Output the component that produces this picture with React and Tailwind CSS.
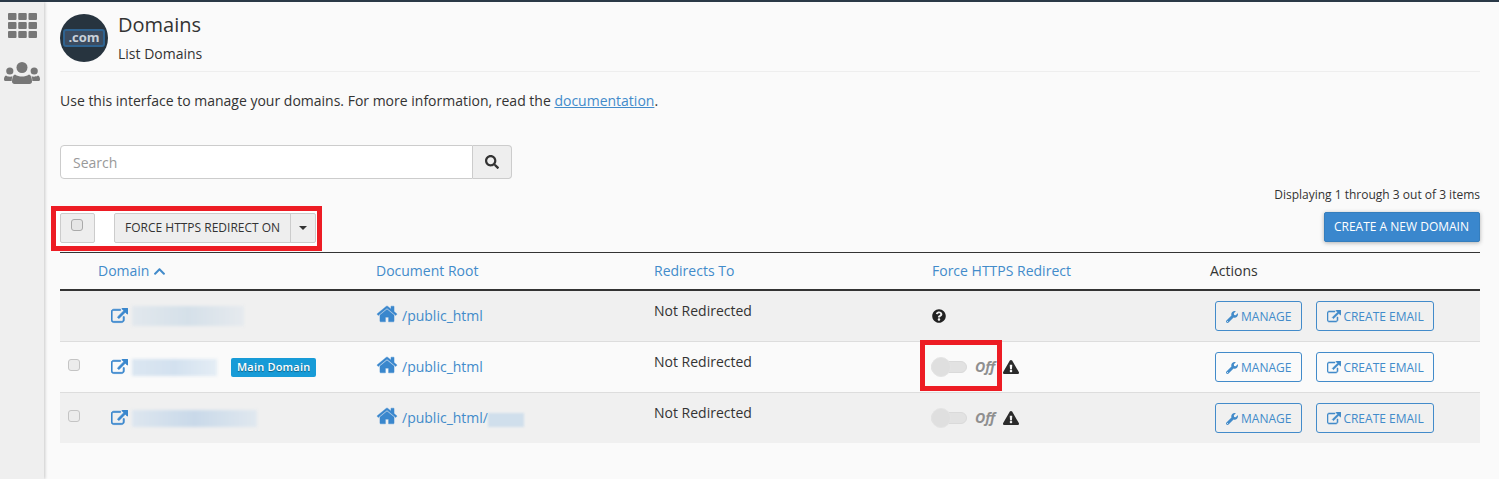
import React from "react";
import { FaChevronUp, FaExclamationTriangle, FaQuestionCircle, FaSearch, FaWrench } from "react-icons/fa";

// Font Awesome 4 shapes, the packaged ones are the redrawn v5 set
const HomeIcon = ({ className }) => (
  <svg className={className} viewBox="0 0 1792 1792" fill="currentColor" stroke="currentColor" strokeWidth="30">
    <path d="M1472 992v480q0 26-19 45t-45 19h-384v-384h-256v384h-384q-26 0-45-19t-19-45v-480q0-1 .5-3t.5-3l575-474 575 474q1 2 1 6zm223-69l-62 74q-8 9-21 11h-3q-13 0-21-7l-692-577-692 577q-12 8-24 7-13-2-21-11l-62-74q-8-10-7-23.500t11-21.500l719-599q32-26 76-26t76 26l244 204v-195q0-14 9-23t23-9h192q14 0 23 9t9 23v408l219 182q10 8 11 21.500t-7 23.500z" />
  </svg>
);

const LinkIcon = ({ className }) => (
  <svg className={className} viewBox="0 0 1792 1792" fill="currentColor" stroke="currentColor" strokeWidth="70">
    <path d="M1408 928v320q0 119-84.500 203.500t-203.500 84.500h-832q-119 0-203.500-84.500t-84.500-203.500v-832q0-119 84.500-203.500t203.500-84.500h704q14 0 23 9t9 23v64q0 14-9 23t-23 9h-704q-66 0-113 47t-47 113v832q0 66 47 113t113 47h832q66 0 113-47t47-113v-320q0-14 9-23t23-9h64q14 0 23 9t9 23zm384-864v512q0 26-19 45t-45 19-45-19l-176-176-652 652q-10 10-23 10t-23-10l-114-114q-10-10-10-23t10-23l652-652-176-176q-19-19-19-45t19-45 45-19h512q26 0 45 19t19 45z" />
  </svg>
);

const UsersIcon = ({ className }) => (
  <svg className={className} viewBox="0 0 36 22" fill="currentColor">
    <circle cx="18" cy="5.500" r="5.500" />
    <circle cx="5.800" cy="9" r="3.600" />
    <circle cx="30.200" cy="9" r="3.600" />
    <path d="M11 12.500c2 1.500 4.500 2 7 2s5-.5 7-2c2 .5 3 3.500 3 7 0 1.500-1 2.500-2.500 2.500h-15c-1.500 0-2.500-1-2.500-2.500 0-3.500 1-6.500 3-7z" />
    <path d="M2 13.500c1 .8 2.500 1.200 4 1.200 1 0 1.800-.2 2.500-.4-.6 1.300-.8 3-.8 4.700h-6.200c-1 0-1.500-.6-1.500-1.500 0-2 .7-3.500 2-4z" />
    <path d="M34 13.500c-1 .8-2.500 1.200-4 1.200-1 0-1.800-.2-2.500-.4.600 1.300.8 3 .8 4.700h6.200c1 0 1.500-.6 1.500-1.500 0-2-.7-3.500-2-4z" />
  </svg>
);

const GridIcon = ({ className }) => (
  <svg className={className} viewBox="0 0 29 25" fill="currentColor">
    <rect x="0" y="0" width="8.500" height="7" rx="1" />
    <rect x="10.250" y="0" width="8.500" height="7" rx="1" />
    <rect x="20.500" y="0" width="8.500" height="7" rx="1" />
    <rect x="0" y="9" width="8.500" height="7" rx="1" />
    <rect x="10.250" y="9" width="8.500" height="7" rx="1" />
    <rect x="20.500" y="9" width="8.500" height="7" rx="1" />
    <rect x="0" y="18" width="8.500" height="7" rx="1" />
    <rect x="10.250" y="18" width="8.500" height="7" rx="1" />
    <rect x="20.500" y="18" width="8.500" height="7" rx="1" />
  </svg>
);

const rows = [
  { blur: "w-[112px] h-[20px] from-[#e2e8ed] via-[#d5e0e9] to-[#e6eaee]", root: "/public_html", https: "unknown", stripe: true, check: false },
  { blur: "w-[85px] h-[17px] from-[#dbe6f1] via-[#d3e1ef] to-[#e4edf5]", main: true, root: "/public_html", https: "off", marked: true, stripe: false, check: true },
  { blur: "w-[125px] h-[17px] from-[#dde6ef] via-[#c9d9e9] to-[#e0e8ef]", root: "/public_html/", rootBlur: true, https: "off", stripe: true, check: true, last: true },
];

const Checkbox = ({ className = "border-[#c4c4c4] bg-[#ececec]" }) => (
  <span className={`block w-3 h-3 rounded-[3px] border ${className}`} />
);

const OffSwitch = () => (
  <div className="flex items-center">
    <div className="relative w-9 h-5 flex items-center">
      <span className="absolute left-0 w-5 h-5 rounded-full bg-[#dfdfdf] border border-[#e4e4e4]" />
      <span className="w-full h-3 rounded-full bg-[#e2e2e2] border border-[#dadada]" />
    </div>
    <span className="ml-2 italic font-bold text-[#8f8f8f] text-sm">Off</span>
    <FaExclamationTriangle className="ml-2 text-[#2b2b2b]" size={16} />
  </div>
);

const Row = ({ row }) => (
  <div className={`grid grid-cols-[38px_278px_278px_278px_278px_1fr] ${row.last ? "h-[50px]" : "h-[51px] border-b border-[#dddddd]"} ${row.stripe ? "bg-[#f0f0f0]" : "bg-[#fafafa]"}`}>
    <div className="flex items-center pl-2 pb-1">{row.check && <Checkbox />}</div>
    <div className="flex items-center pl-[13px]">
      <LinkIcon className="w-[17px] h-[17px] text-[#3a87cd]" />
      <span className={`ml-[4px] bg-gradient-to-r ${row.blur} blur-[1.500px]`} />
      {row.main && (
        <span className="ml-[14px] px-[6px] h-[19px] flex items-center rounded-[2px] bg-[#179bd7] text-white text-[11px] font-semibold tracking-[0.2px] [text-shadow:0_1px_1px_rgba(0,0,0,0.4)]">
          Main Domain
        </span>
      )}
    </div>
    <div className="flex items-center text-[#428bca] text-sm">
      <HomeIcon className="w-[22px] h-[22px] text-[#3a87cd] mb-1" />
      <span className="ml-[4px]">{row.root}</span>
      {row.rootBlur && <span className="w-9 h-[14px] mt-1 bg-[#d0dfec] blur-[1px]" />}
    </div>
    <div className="pt-[10px] text-sm text-[#333333]">Not Redirected</div>
    <div className="relative flex items-center -ml-[1px]">
      {row.https === "unknown" ? (
        <FaQuestionCircle className="ml-[1px] text-[#222222]" size={14} />
      ) : (
        <OffSwitch />
      )}
      {row.marked && (
        <span className="absolute -left-[11px] -top-[2px] w-[82px] h-[51px] border-[5px] border-[#ed1c24]" />
      )}
    </div>
    <div className="flex items-center pl-[5px] gap-[14px]">
      <button className="h-[30px] px-[10px] pt-[1px] flex items-center rounded-[3px] border border-[#428bca] text-[#428bca] text-xs">
        <FaWrench className="mr-[3px]" size={12} />
        MANAGE
      </button>
      <button className="h-[30px] pl-[10px] pr-[9px] pt-[1px] flex items-center rounded-[3px] border border-[#428bca] text-[#428bca] text-xs">
        <LinkIcon className="w-[14px] h-[14px] mr-[2px]" />
        CREATE EMAIL
      </button>
    </div>
  </div>
);

export default function App() {
  return (
    <div className="flex h-[479px] overflow-hidden bg-[#fafafa] border-t-2 border-[#2a3947] font-['Open_Sans',sans-serif] text-[#333333]">
      <aside className="w-[44px] shrink-0 bg-[#efefef] shadow-[1px_0_3px_rgba(0,0,0,0.2)] flex flex-col items-center pt-[11px]">
        <GridIcon className="w-[29px] h-[25px] text-[#777777]" />
        <UsersIcon className="w-[36px] h-[22px] mt-[24px] text-[#777777]" />
      </aside>

      <main className="flex-1 pl-[16px] pr-[19px]">
        <header className="flex items-start h-[57px] pt-[12px] box-content border-b border-[#eeeeee]">
          <div className="w-12 h-12 rounded-full bg-[#27343f] flex items-center justify-center">
            <span className="w-[42px] h-[18px] flex items-center justify-center rounded-[3px] border-2 border-[#2f6390] bg-[#3c4c60] text-[#c9d1da] text-[13px] font-bold">
              .com
            </span>
          </div>
          <div className="ml-[10px] -mt-[1px]">
            <h1 className="text-xl leading-[24px] text-[#333333]">Domains</h1>
            <p className="mt-[7px] text-sm leading-[20px]">List Domains</p>
          </div>
        </header>

        <p className="mt-[19px] text-sm leading-[20px]">
          Use this interface to manage your domains. For more information, read the{" "}
          <span className="text-[#428bca] underline">documentation</span>.
        </p>

        <div className="flex w-[452px] h-[34px] mt-[34px]">
          <div className="flex-1 flex items-center pl-3 pt-[2px] bg-white border border-[#cccccc] rounded-l-[4px] text-sm text-[#999999]">
            Search
          </div>
          <div className="w-[39px] flex items-center justify-center bg-[#eeeeee] border border-l-0 border-[#cccccc] rounded-r-[4px] text-[#333333]">
            <FaSearch size={14} />
          </div>
        </div>

        <div className="flex justify-between items-start mt-[8px]">
          <div className="relative flex items-start mt-[26px] h-[30px]">
            <span className="absolute -left-[9px] -top-[7px] w-[271px] h-[45px] bg-white border-[5px] border-[#ed1c24]" />
            <div className="relative w-[35px] h-[30px] flex items-center justify-center pb-[6px] pr-[1px] bg-[#eeeeee] border border-[#cccccc] rounded-[2px]">
              <Checkbox className="border-[#aaaaaa] bg-[#e6e6e6]" />
            </div>
            <div className="relative ml-[19px] flex h-[30px] bg-[#eeeeee] border border-[#cccccc] rounded-[2px] text-xs">
              <span className="px-[10px] flex items-center text-[#333333]">FORCE HTTPS REDIRECT ON</span>
              <span className="w-[25px] flex items-center justify-center border-l border-[#cccccc]">
                <span className="border-x-4 border-x-transparent border-t-4 border-t-[#333333]" />
              </span>
            </div>
          </div>
          <div className="flex flex-col items-end">
            <p className="text-xs leading-[16px]">Displaying 1 through 3 out of 3 items</p>
            <button className="mt-[9px] h-[30px] pl-[9px] pr-[10px] rounded-[2px] bg-[#3a87cd] border border-[#357ebd] text-white text-xs shadow-[0_1px_4px_rgba(0,0,0,0.3)]">
              CREATE A NEW DOMAIN
            </button>
          </div>
        </div>

        <div className="mt-[9px] border-t border-[#333333]">
          <div className="grid grid-cols-[38px_278px_278px_278px_278px_1fr] h-[38px] items-center text-sm border-b-2 border-[#333333] text-[#428bca]">
            <span />
            <span className="flex items-center">
              Domain
              <FaChevronUp className="ml-1" size={13} />
            </span>
            <span>Document Root</span>
            <span>Redirects To</span>
            <span>Force HTTPS Redirect</span>
            <span className="text-[#333333]">Actions</span>
          </div>
          {rows.map((row, i) => (
            <Row key={i} row={row} />
          ))}
        </div>
      </main>
    </div>
  );
}
